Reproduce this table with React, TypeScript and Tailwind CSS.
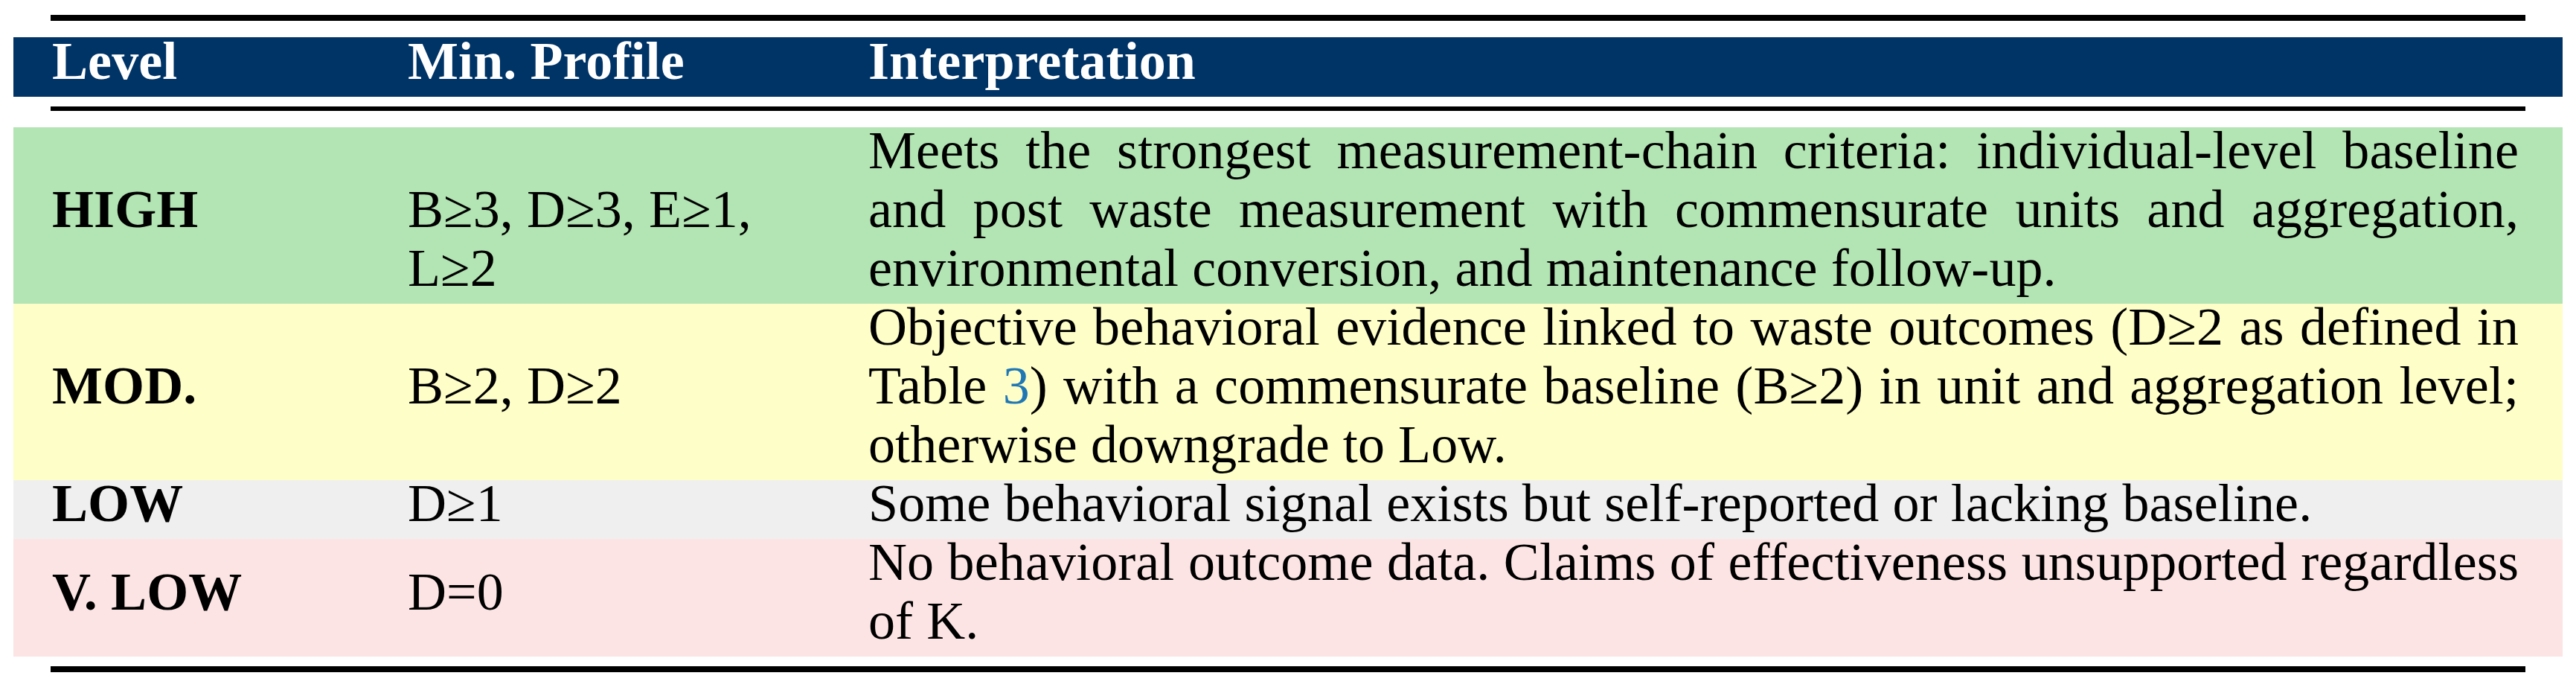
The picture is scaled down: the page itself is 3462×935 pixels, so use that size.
import React from "react";

type Line = { parts: React.ReactNode; justify: boolean };

const GE = "\u2265";

function InterpLines({ lines }: { lines: Line[] }) {
  return (
    <div className="-translate-y-[8px]">
      {lines.map((l, i) => (
        <div
          key={i}
          className={
            l.justify
              ? "whitespace-nowrap text-justify [text-align-last:justify]"
              : "whitespace-nowrap text-left"
          }
        >
          {l.parts}
        </div>
      ))}
    </div>
  );
}

function Row({
  bg,
  level,
  profile,
  profileAlign,
  lines,
}: {
  bg: string;
  level: string;
  profile: string[];
  profileAlign: "center" | "end";
  lines: Line[];
}) {
  return (
    <div className={`grid grid-cols-[478px_619px_2218px] pl-[52px] pr-[51px] ${bg}`}>
      <div className="flex items-center">
        <div className="-translate-y-[8px] font-bold">{level}</div>
      </div>
      <div className={profileAlign === "center" ? "flex items-center" : "flex items-end"}>
        <div className="-translate-y-[8px]">
          {profile.map((p, i) => (
            <div key={i} className="whitespace-nowrap">
              {p}
            </div>
          ))}
        </div>
      </div>
      <InterpLines lines={lines} />
    </div>
  );
}

export default function App() {
  return (
    <div className="w-[3462px] h-[935px] bg-white text-black font-['Liberation_Serif',serif] text-[72px] tracking-[0.1px] leading-[79px] pt-[20px]">
      <div className="mx-[68px] h-[8px] bg-black" />
      <div className="mx-[18px] mt-[22px] h-[80px] bg-[#003366] text-white font-bold grid grid-cols-[478px_619px_2218px] pl-[52px] pr-[51px] items-center">
        <div className="-translate-y-[8px]">Level</div>
        <div className="-translate-y-[8px]">Min. Profile</div>
        <div className="-translate-y-[8px]">Interpretation</div>
      </div>
      <div className="mx-[68px] mt-[13px] h-[6px] bg-black" />
      <div className="mx-[18px] mt-[22px]">
        <Row
          bg="bg-[#b3e4b3]"
          level="HIGH"
          profile={[`B${GE}3, D${GE}3, E${GE}1,`, `L${GE}2`]}
          profileAlign="end"
          lines={[
            {
              parts: "Meets the strongest measurement-chain criteria: individual-level baseline",
              justify: true,
            },
            {
              parts: "and post waste measurement with commensurate units and aggregation,",
              justify: true,
            },
            { parts: "environmental conversion, and maintenance follow-up.", justify: false },
          ]}
        />
        <Row
          bg="bg-[#fefec8]"
          level="MOD."
          profile={[`B${GE}2, D${GE}2`]}
          profileAlign="center"
          lines={[
            {
              parts: `Objective behavioral evidence linked to waste outcomes (D${GE}2 as defined in`,
              justify: true,
            },
            {
              parts: (
                <>
                  Table <span className="text-[#1f77b4]">3</span>) with a commensurate baseline (B{GE}2) in
                  unit and aggregation level;
                </>
              ),
              justify: true,
            },
            { parts: "otherwise downgrade to Low.", justify: false },
          ]}
        />
        <Row
          bg="bg-[#efefef]"
          level="LOW"
          profile={[`D${GE}1`]}
          profileAlign="center"
          lines={[
            {
              parts: "Some behavioral signal exists but self-reported or lacking baseline.",
              justify: false,
            },
          ]}
        />
        <Row
          bg="bg-[#fde4e4]"
          level="V. LOW"
          profile={["D=0"]}
          profileAlign="center"
          lines={[
            {
              parts: "No behavioral outcome data. Claims of effectiveness unsupported regardless",
              justify: true,
            },
            { parts: "of K.", justify: false },
          ]}
        />
      </div>
      <div className="mx-[68px] mt-[13px] h-[8px] bg-black" />
    </div>
  );
}
